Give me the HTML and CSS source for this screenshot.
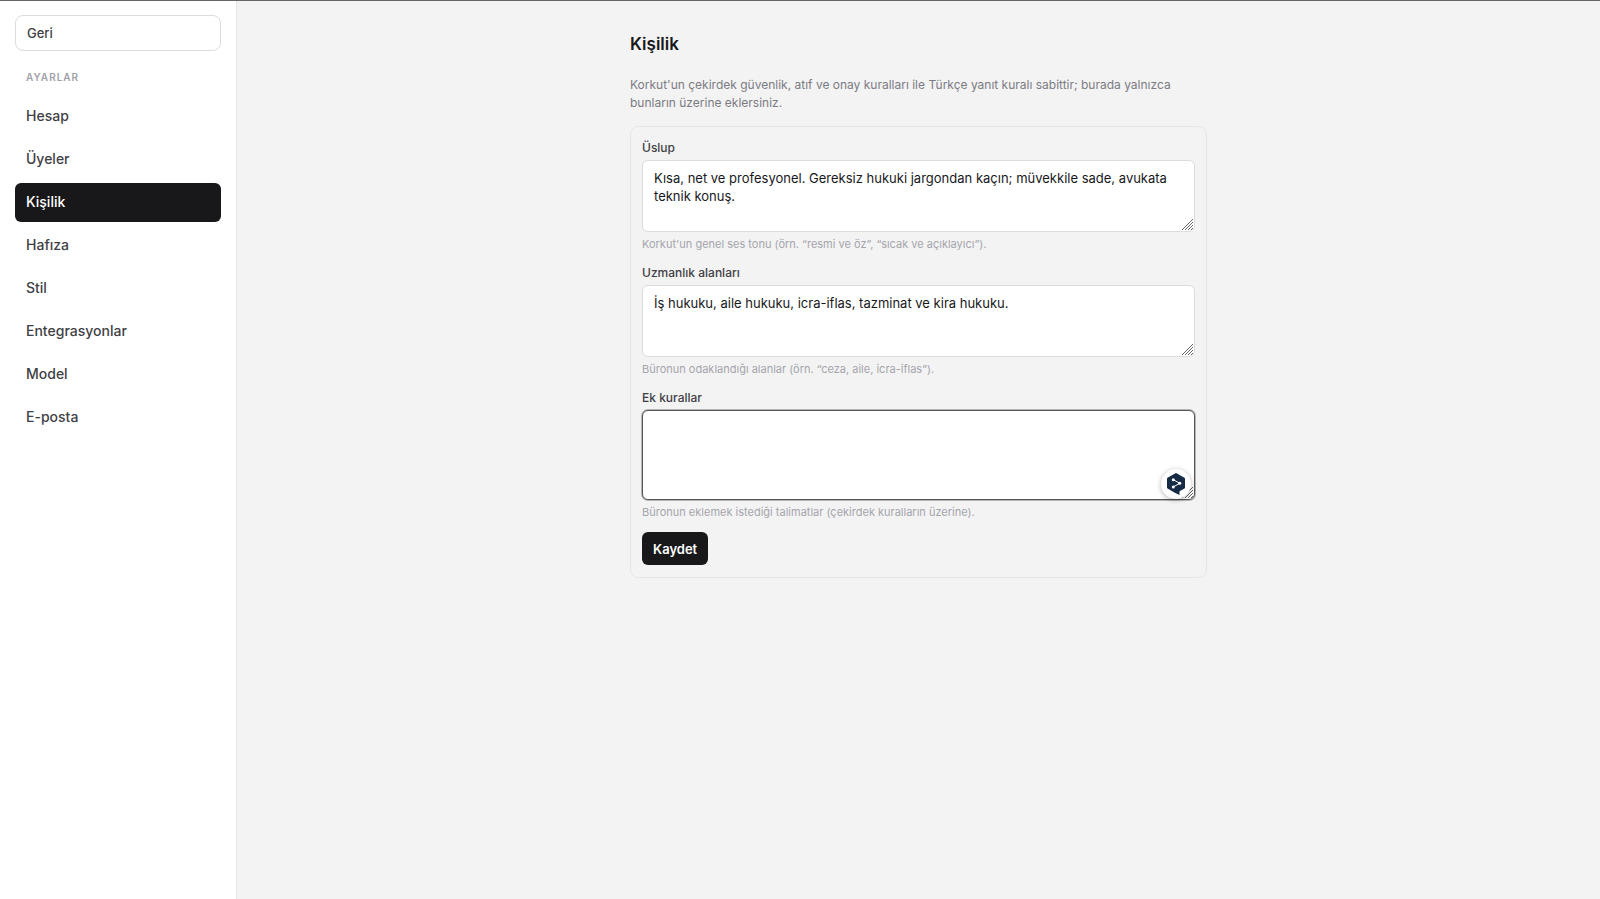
FILE: index.html
```
<!DOCTYPE html>
<html lang="tr">
<head>
    <meta charset="UTF-8">
    <title>Kişilik</title>
    <link rel="stylesheet" href="styles.css">
</head>
<body>
    <aside class="sidebar">
        <button type="button" class="back">Geri</button>
        <h2 class="sidebar-title">Ayarlar</h2>
        <nav class="nav">
            <a href="#hesap">Hesap</a>
            <a href="#uyeler">Üyeler</a>
            <a href="#kisilik" class="active">Kişilik</a>
            <a href="#hafiza">Hafıza</a>
            <a href="#stil">Stil</a>
            <a href="#entegrasyonlar">Entegrasyonlar</a>
            <a href="#model">Model</a>
            <a href="#eposta">E-posta</a>
        </nav>
    </aside>

    <main class="main">
        <div class="content">
            <h1>Kişilik</h1>
            <p class="intro">Korkut'un çekirdek güvenlik, atıf ve onay kuralları ile Türkçe yanıt kuralı sabittir; burada yalnızca bunların üzerine eklersiniz.</p>

            <form class="card">
                <div class="field">
                    <label for="tone">Üslup</label>
                    <textarea id="tone" rows="3" spellcheck="false">Kısa, net ve profesyonel. Gereksiz hukuki jargondan kaçın; müvekkile sade, avukata teknik konuş.</textarea>
                    <p class="hint">Korkut'un genel ses tonu (örn. “resmi ve öz”, “sıcak ve açıklayıcı”).</p>
                </div>
                <div class="field">
                    <label for="areas">Uzmanlık alanları</label>
                    <textarea id="areas" rows="3" spellcheck="false">İş hukuku, aile hukuku, icra-iflas, tazminat ve kira hukuku.</textarea>
                    <p class="hint">Büronun odaklandığı alanlar (örn. “ceza, aile, icra-iflas”).</p>
                </div>
                <div class="field">
                    <label for="rules">Ek kurallar</label>
                    <div class="input-wrap">
                        <textarea id="rules" class="focused" rows="4" spellcheck="false"></textarea>
                        <span class="assist">
                            <svg width="20" height="24" viewBox="0 0 20 24">
                                <path d="M10 1 L18.500 5.800 Q19 6.100 19 6.700 V15.600 Q19 16.200 18.500 16.500 L13.500 19.300 V23 L8.800 20.700 L1.500 16.500 Q1 16.200 1 15.600 V6.700 Q1 6.100 1.500 5.800 Z" fill="#152b46"/>
                                <path d="M7.500 7.800 L13.800 11.300 L7.500 14.800" fill="none" stroke="#fff" stroke-width="1"/>
                                <circle cx="7.300" cy="7.700" r="1.500" fill="#fff"/>
                                <circle cx="13.800" cy="11.300" r="1.500" fill="#fff"/>
                                <circle cx="7.300" cy="14.900" r="1.500" fill="#fff"/>
                            </svg>
                        </span>
                    </div>
                    <p class="hint">Büronun eklemek istediği talimatlar (çekirdek kuralların üzerine).</p>
                </div>
                <button type="submit" class="save">Kaydet</button>
            </form>
        </div>
    </main>
</body>
</html>
```
FILE: styles.css
```
* {
    box-sizing: border-box;
}
body {
    margin: 0;
    min-height: 100vh;
    display: flex;
    border-top: 1px solid #68646c;
    background: #f3f3f3;
    color: #18181b;
    font-family: Inter, "Liberation Sans", sans-serif;
    font-size: 13px;
    line-height: 18px;
}
h1, h2, p {
    margin: 0;
}
button, textarea {
    font: inherit;
}

/* sidebar */
.sidebar {
    width: 237px;
    flex-shrink: 0;
    padding: 14px 15px;
    background: #fff;
    border-right: 1px solid #e7e7e9;
}
.back {
    display: block;
    width: 100%;
    height: 36px;
    padding: 0 11px;
    text-align: left;
    color: #3f3f46;
    font-weight: 500;
    background: #fff;
    border: 1px solid #dcdcdf;
    border-radius: 8px;
    cursor: pointer;
}
.sidebar-title {
    padding: 18px 11px 12px;
    color: #a1a1aa;
    font-size: 10px;
    line-height: 16px;
    font-weight: 600;
    letter-spacing: 1px;
    text-transform: uppercase;
}
.nav {
    display: flex;
    flex-direction: column;
    gap: 4px;
}
.nav a {
    padding: 10px 11px 11px;
    border-radius: 6px;
    color: #3f3f46;
    font-size: 14px;
    font-weight: 500;
    text-decoration: none;
}
.nav a.active {
    background: #18181b;
    color: #fff;
}

/* content */
.main {
    flex: 1;
    padding: 31px 24px;
}
.content {
    max-width: 577px;
    margin: 0 auto;
}
h1 {
    font-size: 17px;
    line-height: 24px;
    font-weight: 600;
}
.intro {
    margin: 20px 0 14px;
    color: #7b7b84;
    font-size: 12px;
}
.card {
    padding: 12px 11px;
    border: 1px solid #e6e6e8;
    border-radius: 8px;
}
.field {
    margin-bottom: 12px;
}
.field label {
    display: block;
    margin-bottom: 3px;
    color: #3f3f46;
    font-size: 12px;
    line-height: 18px;
    font-weight: 500;
}
textarea {
    display: block;
    width: 100%;
    padding: 8px 11px;
    color: #18181b;
    background: #fff;
    border: 1px solid #dcdcdf;
    border-radius: 6px;
    outline: none;
    resize: vertical;
}
textarea::-webkit-resizer {
    background: url("data:image/svg+xml,%3Csvg xmlns='http://www.w3.org/2000/svg' width='13' height='13'%3E%3Cpath d='M1 12L12 1M4 12L12 4M7 12L12 7M10 12L12 10' stroke='%23666' fill='none'/%3E%3C/svg%3E") no-repeat right bottom;
}
textarea.focused {
    border-color: #55555a;
    box-shadow: 0 0 0 1px #b5b5b8;
}
.hint {
    margin-top: 4px;
    color: #a5a5ad;
    font-size: 11px;
    line-height: 16px;
}
.input-wrap {
    position: relative;
}
.assist {
    position: absolute;
    right: 4px;
    bottom: 1px;
    width: 30px;
    height: 30px;
    display: flex;
    align-items: center;
    justify-content: center;
    background: #fff;
    border-radius: 50%;
    box-shadow: 0 1px 5px rgba(0,0,0,0.3);
    pointer-events: none;
}
.save {
    display: block;
    height: 33px;
    padding: 0 11px;
    color: #fff;
    background: #18181b;
    font-weight: 600;
    border: none;
    border-radius: 6px;
    cursor: pointer;
}
```
